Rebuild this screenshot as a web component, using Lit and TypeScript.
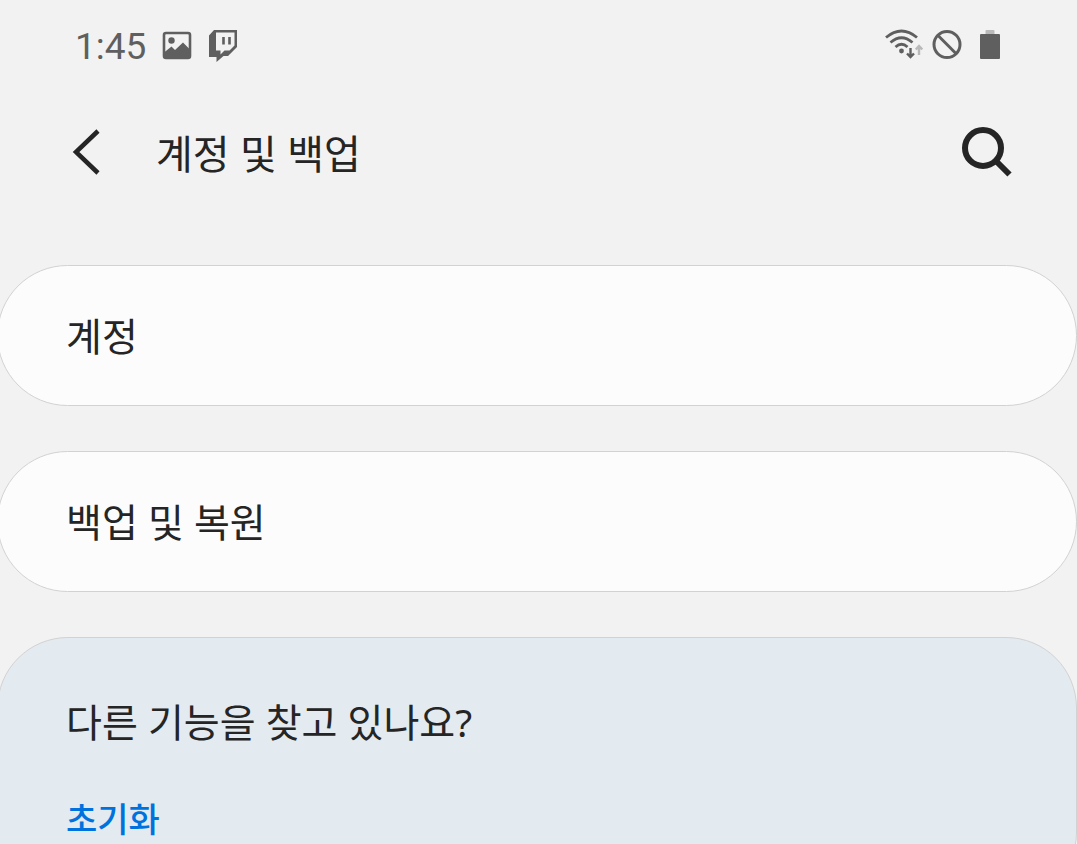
import { LitElement, html, css } from "lit";
import { customElement } from "lit/decorators.js";

@customElement("status-bar")
class StatusBar extends LitElement {
  static styles = css`
    :host {
      display: flex;
      align-items: center;
      justify-content: space-between;
      height: 44px;
      padding: 23px 76px 0 75px;
      color: #5f5f5f;
    }
    .group {
      display: flex;
      align-items: center;
    }
    .time {
      font: 400 37px/44px Roboto, sans-serif;
      padding-top: 4px;
      margin-right: 16px;
    }
    svg {
      display: block;
    }
    .picture {
      margin-right: 16px;
    }
    .wifi {
      margin-right: 9px;
    }
    .blocked {
      margin-right: 17px;
    }
  `;

  render() {
    return html`
      <div class="group">
        <span class="time">1:45</span>
        <svg class="picture" width="30" height="30" viewBox="0 0 30 30" aria-hidden="true">
          <rect x="2" y="3" width="26" height="25" rx="2" fill="none" stroke="currentColor" stroke-width="2.6" />
          <circle cx="9.5" cy="10.5" r="3.2" fill="currentColor" />
          <path d="M2 22.5 9.500 16.500 13 20 21 12.500 28 19.500V28H2Z" fill="currentColor" />
        </svg>
        <svg width="30" height="34" viewBox="0 0 30 34" aria-hidden="true">
          <path
            fill="currentColor"
            fill-rule="evenodd"
            d="M6 2H29V19L20 28H15.500L8.500 34V29H1V7.500ZM8 4.500V22.500H12.500V26.500L16.500 22.500H21.500L26.500 17.500V4.500Z"
          />
          <path d="M15.500 9V16.500M21.500 9V16.500" stroke="currentColor" stroke-width="2.600" />
        </svg>
      </div>
      <div class="group">
        <svg class="wifi" width="39" height="32" viewBox="0 0 39 32" aria-hidden="true">
          <g fill="none" stroke="currentColor" stroke-width="2.800">
            <path d="M2 8.500Q17.500-4.500 33 8.500" />
            <path d="M6.500 13.500Q17.500 4 28.500 13.500" />
            <path d="M11.500 18Q17.500 12.500 23.500 18" />
            <path d="M26.500 19V28M23 24.500 26.500 28 30 24.500" stroke-width="2.400" />
            <path d="M35 26V17M31.800 20.500 35 17 38.200 20.500" stroke="#b9b9b9" stroke-width="2.400" />
          </g>
          <circle cx="17.500" cy="22" r="2.400" fill="currentColor" />
        </svg>
        <svg class="blocked" width="30" height="30" viewBox="0 0 30 30" aria-hidden="true">
          <circle cx="15" cy="14.500" r="13" fill="none" stroke="currentColor" stroke-width="3" />
          <path d="M5.800 5.300 24.200 23.700" stroke="currentColor" stroke-width="3" />
        </svg>
        <svg width="22" height="30" viewBox="0 0 22 30" aria-hidden="true">
          <rect x="6.500" y="0" width="9" height="6" rx="1" fill="#b9b9b9" />
          <rect x="1" y="4" width="20" height="25" rx="1" fill="currentColor" />
        </svg>
      </div>
    `;
  }
}

@customElement("app-root")
export class AppRoot extends LitElement {
  static styles = css`
    :host {
      display: block;
      height: 100vh;
      overflow: hidden;
      background: #f2f2f2;
      color: #252525;
      font-family: "Noto Sans", "Noto Sans CJK KR", sans-serif;
    }
    button {
      font: inherit;
      color: inherit;
      background: none;
      border: 0;
      margin: 0;
      padding: 0;
      text-align: left;
      cursor: pointer;
    }
    svg {
      display: block;
    }
    header {
      display: flex;
      align-items: center;
      height: 56px;
      padding: 57px 64px 0 72px;
    }
    h1 {
      flex: 1;
      margin: 0 0 0 56px;
      padding-top: 4px;
      font-size: 40px;
      line-height: 56px;
      font-weight: 400;
    }
    main {
      display: flex;
      flex-direction: column;
      gap: 45px;
      margin: 85px 0 0 -3px;
    }
    .card {
      box-sizing: border-box;
      border: 1px solid #d2d2d2;
      border-radius: 71px;
      background: #fcfcfc;
      padding: 41px 68px 40px;
      font-size: 39px;
      line-height: 58px;
    }
    .tips {
      background: #e3eaf0;
      padding-top: 55px;
      padding-bottom: 55px;
    }
    .tips h2 {
      margin: 0 0 40px;
      font-size: 39px;
      line-height: 58px;
      font-weight: 400;
    }
    .tips a {
      display: block;
      width: fit-content;
      color: #0072de;
      font-size: 34px;
      line-height: 56px;
      font-weight: 500;
      text-decoration: none;
    }
  `;

  render() {
    return html`
      <status-bar></status-bar>
      <header>
        <button aria-label="뒤로">
          <svg width="28" height="48" viewBox="0 0 28 48">
            <path d="M26 3 4 24 26 45" fill="none" stroke="currentColor" stroke-width="4.500" />
          </svg>
        </button>
        <h1>계정 및 백업</h1>
        <button aria-label="검색">
          <svg width="52" height="52" viewBox="0 0 52 52">
            <circle cx="22" cy="22" r="18" fill="none" stroke="currentColor" stroke-width="6" />
            <path d="M34.500 34.500 48.500 48.500" stroke="currentColor" stroke-width="6" />
          </svg>
        </button>
      </header>
      <main>
        <button class="card">계정</button>
        <button class="card">백업 및 복원</button>
        <section class="card tips">
          <h2>다른 기능을 찾고 있나요?</h2>
          <a href="#reset">초기화</a>
        </section>
      </main>
    `;
  }
}
